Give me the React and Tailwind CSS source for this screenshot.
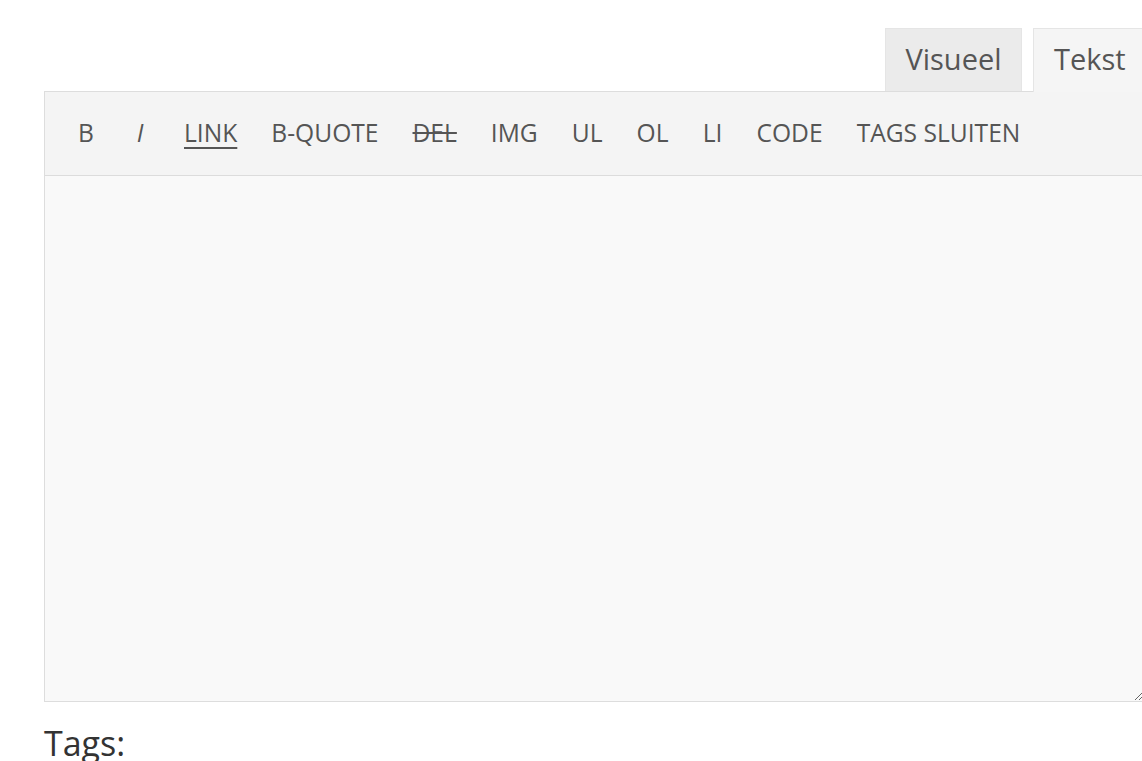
import React from "react";

const btn = "min-w-[54px] px-[17px] h-[40px] flex items-center justify-center text-[24.6px] text-[#555] leading-none whitespace-nowrap";

export default function App() {
  return (
    <div className="w-[1142px] h-[761px] overflow-hidden bg-white" style={{ fontFamily: '"Open Sans", sans-serif' }}>
      <div className="pl-[44px] pt-[28px] w-[1144px]">
        <div className="flex justify-end items-end h-[63px] pr-[0px]">
          <div className="h-[63px] w-[137px] pb-[3px] flex items-center justify-center bg-[#ebebeb] border border-b-0 border-[#e5e5e5] text-[29px] text-[#555]">
            Visueel
          </div>
          <div className="relative z-10 -mb-px ml-[11px] h-[64px] w-[111px] pl-[20px] pb-[4px] flex items-center bg-[#f5f5f5] border border-b-0 border-[#e5e5e5] text-[29px] text-[#555]">
            Tekst
          </div>
        </div>
        <div className="w-[1100px] border border-[#dddddd] bg-[#f9f9f9]">
          <div className="h-[84px] bg-[#f4f4f4] border-b border-[#dcdcdc] flex items-center pl-[14px]">
            <span className={btn}>B</span>
            <span className={btn + " italic"}>I</span>
            <span className={btn + " underline underline-offset-[5px] decoration-[1.5px]"}>LINK</span>
            <span className={btn}>B-QUOTE</span>
            <span className={btn + " line-through decoration-[1.5px]"}>DEL</span>
            <span className={btn}>IMG</span>
            <span className={btn}>UL</span>
            <span className={btn}>OL</span>
            <span className={btn}>LI</span>
            <span className={btn}>CODE</span>
            <span className={btn}>TAGS SLUITEN</span>
          </div>
          <textarea className="block w-full h-[525px] bg-[#f9f9f9] outline-none border-0 resize-y" />
        </div>
        <div className="mt-[24px] text-[34px] leading-none text-[#333]">Tags:</div>
      </div>
    </div>
  );
}
